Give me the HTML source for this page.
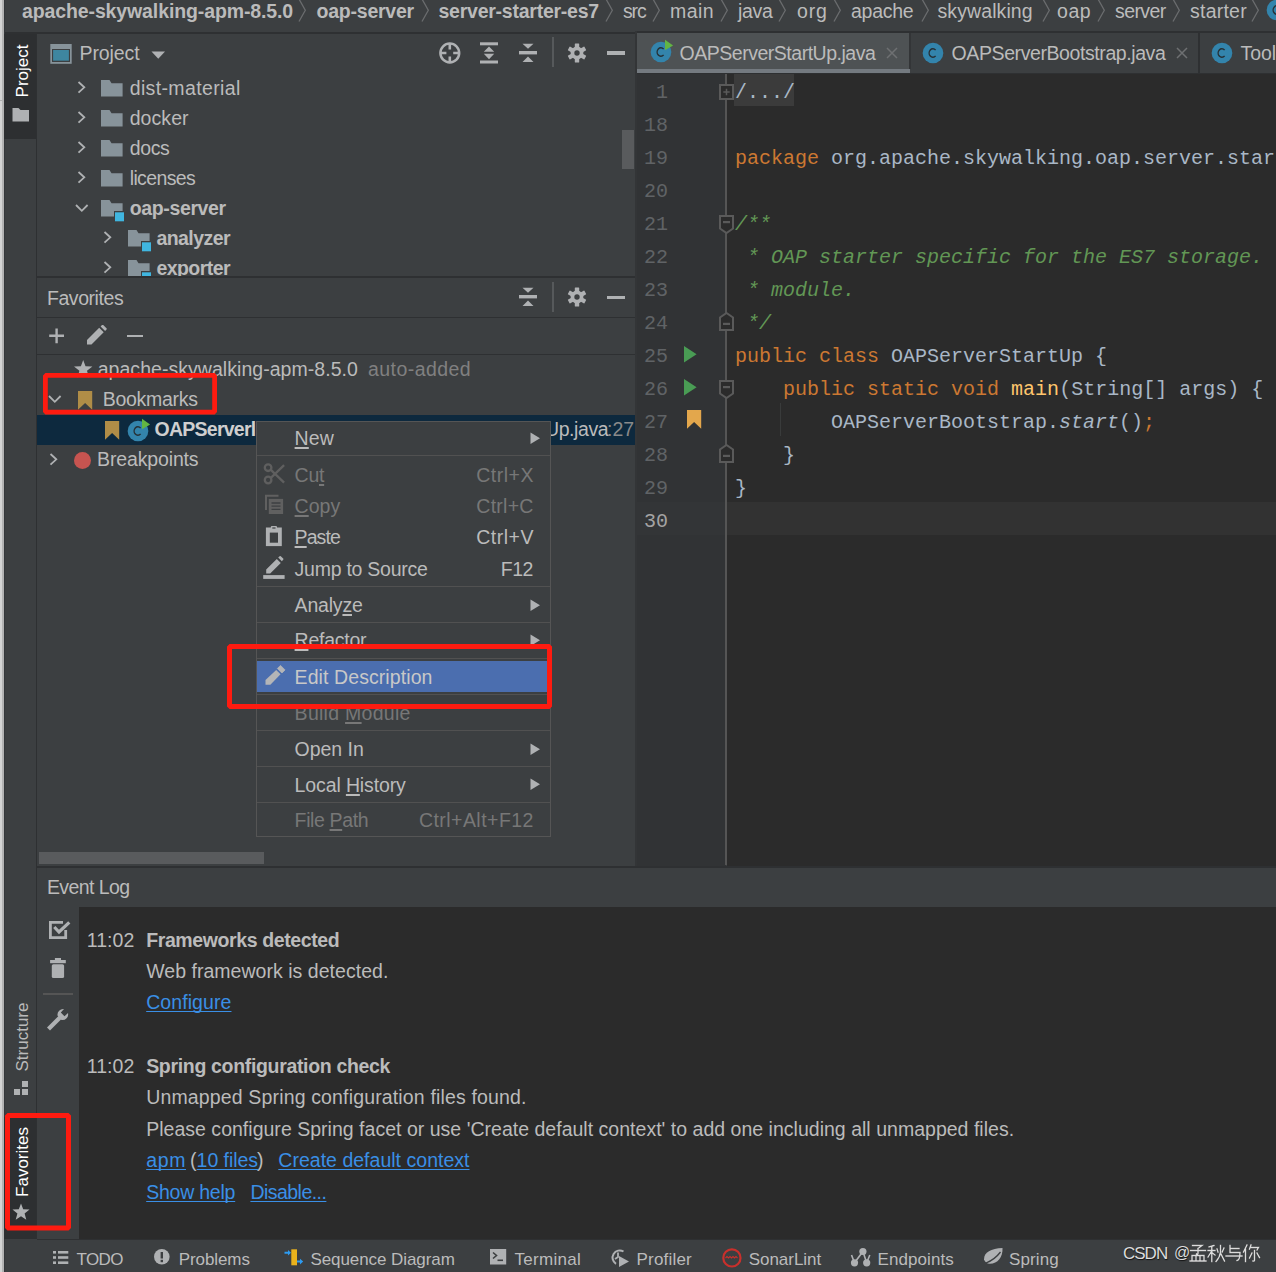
<!DOCTYPE html>
<html><head><meta charset="utf-8"><style>
html,body{margin:0;padding:0;}
body{width:1276px;height:1272px;position:relative;overflow:hidden;background:#3C3F41;font-family:"Liberation Sans",sans-serif;}
body div, body svg{position:absolute;}
.t{white-space:pre;}
.code{font-family:"Liberation Mono",monospace;font-size:20px;line-height:20px;}
u{text-decoration:underline;}
</style></head><body>
<div style="left:0px;top:0px;width:1276px;height:1272px;background:#3C3F41;"></div>
<div style="left:0px;top:0px;width:2px;height:1272px;background:#D4D4D4;"></div>
<div style="left:2px;top:0px;width:2px;height:1272px;background:#B3B3B3;"></div>
<div style="left:0px;top:100px;width:2px;height:1px;background:#B0B0B0;"></div>
<div style="left:4px;top:32px;width:632px;height:2px;background:#2E3032;"></div>
<div style="left:636px;top:31px;width:640px;height:2px;background:#2E3032;"></div>
<div class="t" style="left:22px;top:1.99px;font-size:19.5px;line-height:19.5px;color:#BBBBBB;font-weight:bold;font-family:'Liberation Sans', sans-serif;letter-spacing:-0.116px;">apache-skywalking-apm-8.5.0</div>
<div class="t" style="left:316.5px;top:1.99px;font-size:19.5px;line-height:19.5px;color:#BBBBBB;font-weight:bold;font-family:'Liberation Sans', sans-serif;letter-spacing:-0.224px;">oap-server</div>
<div class="t" style="left:438.5px;top:1.99px;font-size:19.5px;line-height:19.5px;color:#BBBBBB;font-weight:bold;font-family:'Liberation Sans', sans-serif;letter-spacing:-0.242px;">server-starter-es7</div>
<div class="t" style="left:623px;top:1.99px;font-size:19.5px;line-height:19.5px;color:#BBBBBB;font-weight:normal;font-family:'Liberation Sans', sans-serif;letter-spacing:-1.150px;">src</div>
<div class="t" style="left:670px;top:1.99px;font-size:19.5px;line-height:19.5px;color:#BBBBBB;font-weight:normal;font-family:'Liberation Sans', sans-serif;letter-spacing:0.445px;">main</div>
<div class="t" style="left:738px;top:1.99px;font-size:19.5px;line-height:19.5px;color:#BBBBBB;font-weight:normal;font-family:'Liberation Sans', sans-serif;letter-spacing:-0.289px;">java</div>
<div class="t" style="left:797px;top:1.99px;font-size:19.5px;line-height:19.5px;color:#BBBBBB;font-weight:normal;font-family:'Liberation Sans', sans-serif;letter-spacing:0.806px;">org</div>
<div class="t" style="left:851px;top:1.99px;font-size:19.5px;line-height:19.5px;color:#BBBBBB;font-weight:normal;font-family:'Liberation Sans', sans-serif;letter-spacing:-0.274px;">apache</div>
<div class="t" style="left:937.5px;top:1.99px;font-size:19.5px;line-height:19.5px;color:#BBBBBB;font-weight:normal;font-family:'Liberation Sans', sans-serif;letter-spacing:0.093px;">skywalking</div>
<div class="t" style="left:1057px;top:1.99px;font-size:19.5px;line-height:19.5px;color:#BBBBBB;font-weight:normal;font-family:'Liberation Sans', sans-serif;letter-spacing:0.584px;">oap</div>
<div class="t" style="left:1115px;top:1.99px;font-size:19.5px;line-height:19.5px;color:#BBBBBB;font-weight:normal;font-family:'Liberation Sans', sans-serif;letter-spacing:-0.597px;">server</div>
<div class="t" style="left:1190px;top:1.99px;font-size:19.5px;line-height:19.5px;color:#BBBBBB;font-weight:normal;font-family:'Liberation Sans', sans-serif;letter-spacing:0.236px;">starter</div>
<svg style="left:297.7px;top:0px;" width="10" height="24" viewBox="0 0 10 24"><path d="M1 -1 L7.3 10.3 L1 21.5" fill="none" stroke="#6A6C6E" stroke-width="1.3"/></svg>
<svg style="left:420.6px;top:0px;" width="10" height="24" viewBox="0 0 10 24"><path d="M1 -1 L7.3 10.3 L1 21.5" fill="none" stroke="#6A6C6E" stroke-width="1.3"/></svg>
<svg style="left:605px;top:0px;" width="10" height="24" viewBox="0 0 10 24"><path d="M1 -1 L7.3 10.3 L1 21.5" fill="none" stroke="#6A6C6E" stroke-width="1.3"/></svg>
<svg style="left:652px;top:0px;" width="10" height="24" viewBox="0 0 10 24"><path d="M1 -1 L7.3 10.3 L1 21.5" fill="none" stroke="#6A6C6E" stroke-width="1.3"/></svg>
<svg style="left:720px;top:0px;" width="10" height="24" viewBox="0 0 10 24"><path d="M1 -1 L7.3 10.3 L1 21.5" fill="none" stroke="#6A6C6E" stroke-width="1.3"/></svg>
<svg style="left:777.7px;top:0px;" width="10" height="24" viewBox="0 0 10 24"><path d="M1 -1 L7.3 10.3 L1 21.5" fill="none" stroke="#6A6C6E" stroke-width="1.3"/></svg>
<svg style="left:833px;top:0px;" width="10" height="24" viewBox="0 0 10 24"><path d="M1 -1 L7.3 10.3 L1 21.5" fill="none" stroke="#6A6C6E" stroke-width="1.3"/></svg>
<svg style="left:921px;top:0px;" width="10" height="24" viewBox="0 0 10 24"><path d="M1 -1 L7.3 10.3 L1 21.5" fill="none" stroke="#6A6C6E" stroke-width="1.3"/></svg>
<svg style="left:1041.5px;top:0px;" width="10" height="24" viewBox="0 0 10 24"><path d="M1 -1 L7.3 10.3 L1 21.5" fill="none" stroke="#6A6C6E" stroke-width="1.3"/></svg>
<svg style="left:1096.8px;top:0px;" width="10" height="24" viewBox="0 0 10 24"><path d="M1 -1 L7.3 10.3 L1 21.5" fill="none" stroke="#6A6C6E" stroke-width="1.3"/></svg>
<svg style="left:1172px;top:0px;" width="10" height="24" viewBox="0 0 10 24"><path d="M1 -1 L7.3 10.3 L1 21.5" fill="none" stroke="#6A6C6E" stroke-width="1.3"/></svg>
<svg style="left:1251px;top:0px;" width="10" height="24" viewBox="0 0 10 24"><path d="M1 -1 L7.3 10.3 L1 21.5" fill="none" stroke="#6A6C6E" stroke-width="1.3"/></svg>
<div style="left:4px;top:34px;width:32px;height:1205px;background:#3C3F41;"></div>
<div style="left:4px;top:0px;width:1px;height:1272px;background:#34373A;"></div>
<div style="left:36px;top:34px;width:1px;height:1205px;background:#2E3032;"></div>
<div style="left:4px;top:34px;width:31.5px;height:105px;background:#2D2F31;"></div>
<div class="t" style="left:22px;top:71px;transform:translate(-50%,-50%) rotate(-90deg);font-size:17px;line-height:17px;color:#FFFFFF;">Project</div>
<svg style="left:12px;top:107px;" width="18" height="16" viewBox="0 0 18 16"><path d="M0.5 1 H6.5 L8.5 3 H17 V14.5 H0.5 Z" fill="#AFB1B3"/></svg>
<div class="t" style="left:22px;top:1037px;transform:translate(-50%,-50%) rotate(-90deg);font-size:17px;line-height:17px;color:#BBBBBB;">Structure</div>
<svg style="left:14px;top:1081px;" width="14" height="14" viewBox="0 0 14 14"><rect x="8" y="0" width="6" height="6" fill="#AFB1B3"/><rect x="0" y="8" width="6" height="6" fill="#AFB1B3"/><rect x="8" y="8" width="6" height="6" fill="#AFB1B3"/></svg>
<div style="left:4px;top:1117px;width:31.5px;height:122px;background:#2D2F31;"></div>
<div class="t" style="left:22px;top:1162px;transform:translate(-50%,-50%) rotate(-90deg);font-size:17px;line-height:17px;color:#FFFFFF;">Favorites</div>
<svg style="left:12px;top:1203px;" width="18" height="18" viewBox="0 0 18 18"><path d="M9 0.5 L11.2 6.3 L17.5 6.6 L12.6 10.6 L14.3 16.8 L9 13.3 L3.7 16.8 L5.4 10.6 L0.5 6.6 L6.8 6.3 Z" fill="#AFB1B3"/></svg>
<div style="left:37px;top:34px;width:599px;height:242px;background:#3C3F41;"></div>
<svg style="left:50px;top:44px;" width="22" height="19.5" viewBox="0 0 22 19.5"><rect x="0.3" y="0" width="21.4" height="19.8" fill="#87939A"/><rect x="2" y="5" width="18" height="13" fill="#3C3F41"/><rect x="3.1" y="6" width="15.8" height="10.7" fill="#3E86A0"/></svg>
<div class="t" style="left:79.5px;top:44.49px;font-size:19.5px;line-height:19.5px;color:#BBBBBB;font-weight:normal;font-family:'Liberation Sans', sans-serif;letter-spacing:-0.081px;">Project</div>
<svg style="left:151px;top:50px;" width="15" height="10" viewBox="0 0 15 10"><path d="M0.5 1.5 H14 L7.25 8.8 Z" fill="#AFB1B3"/></svg>
<svg style="left:438px;top:42px;" width="24" height="24" viewBox="0 0 24 24"><circle cx="11.8" cy="11" r="9.4" fill="none" stroke="#AFB1B3" stroke-width="2.5"/><path d="M11.8 1.7 V7.6 M11.8 14.4 V20.3 M2.4 11 H8.4 M15.2 11 H21.2" stroke="#AFB1B3" stroke-width="2.6"/></svg>
<svg style="left:478px;top:40px;" width="22" height="26" viewBox="0 0 22 26"><rect x="2" y="2.3" width="18" height="3" fill="#AFB1B3"/><rect x="2" y="20.5" width="18" height="3" fill="#AFB1B3"/><path d="M11 6.5 L16.2 11.7 H5.8 Z M5.8 13.8 H16.2 L11 19.2 Z" fill="#AFB1B3"/></svg>
<svg style="left:517px;top:40px;" width="22" height="26" viewBox="0 0 22 26"><rect x="2" y="11" width="18" height="3.4" fill="#AFB1B3"/><path d="M5.5 3.8 H16.5 L11 8.7 Z M11 16.6 L16.5 22 H5.5 Z" fill="#AFB1B3"/></svg>
<div style="left:552px;top:37px;width:2px;height:30px;background:#56595B;"></div>
<svg style="left:567px;top:43px;" width="19.5" height="20" viewBox="0 0 19.5 20"><g transform="translate(10,10)"><circle r="6.4" fill="#AFB1B3"/><g fill="#AFB1B3"><rect x="-2.2" y="-9.5" width="4.4" height="19" rx="0.6"/><rect x="-2.2" y="-9.5" width="4.4" height="19" rx="0.6" transform="rotate(60)"/><rect x="-2.2" y="-9.5" width="4.4" height="19" rx="0.6" transform="rotate(120)"/></g><circle r="2.7" fill="#3C3F41"/></g></svg>
<div style="left:607px;top:51px;width:18px;height:3.7px;background:#AFB1B3;"></div>
<div style="left:622px;top:130px;width:12px;height:39px;background:#595B5D;"></div>
<svg style="left:76.5px;top:81.05px;" width="10" height="13" viewBox="0 0 10 13"><path d="M1.5 1 L7.3 6.35 L1.5 11.7" fill="none" stroke="#AFB1B3" stroke-width="1.8"/></svg>
<svg style="left:101.3px;top:79.8px;" width="24" height="22" viewBox="0 0 24 22"><path d="M0 0 H8.5 L10.5 3.3 H21.6 V16.5 H0 Z" fill="#87939A"/></svg>
<div class="t" style="left:129.7px;top:79.29px;font-size:19.5px;line-height:19.5px;color:#BBBBBB;font-weight:normal;font-family:'Liberation Sans', sans-serif;letter-spacing:0.366px;">dist-material</div>
<svg style="left:76.5px;top:111.05px;" width="10" height="13" viewBox="0 0 10 13"><path d="M1.5 1 L7.3 6.35 L1.5 11.7" fill="none" stroke="#AFB1B3" stroke-width="1.8"/></svg>
<svg style="left:101.3px;top:109.8px;" width="24" height="22" viewBox="0 0 24 22"><path d="M0 0 H8.5 L10.5 3.3 H21.6 V16.5 H0 Z" fill="#87939A"/></svg>
<div class="t" style="left:129.7px;top:109.29px;font-size:19.5px;line-height:19.5px;color:#BBBBBB;font-weight:normal;font-family:'Liberation Sans', sans-serif;letter-spacing:0.074px;">docker</div>
<svg style="left:76.5px;top:141.05px;" width="10" height="13" viewBox="0 0 10 13"><path d="M1.5 1 L7.3 6.35 L1.5 11.7" fill="none" stroke="#AFB1B3" stroke-width="1.8"/></svg>
<svg style="left:101.3px;top:139.8px;" width="24" height="22" viewBox="0 0 24 22"><path d="M0 0 H8.5 L10.5 3.3 H21.6 V16.5 H0 Z" fill="#87939A"/></svg>
<div class="t" style="left:129.7px;top:139.29px;font-size:19.5px;line-height:19.5px;color:#BBBBBB;font-weight:normal;font-family:'Liberation Sans', sans-serif;letter-spacing:-0.362px;">docs</div>
<svg style="left:76.5px;top:171.05px;" width="10" height="13" viewBox="0 0 10 13"><path d="M1.5 1 L7.3 6.35 L1.5 11.7" fill="none" stroke="#AFB1B3" stroke-width="1.8"/></svg>
<svg style="left:101.3px;top:169.8px;" width="24" height="22" viewBox="0 0 24 22"><path d="M0 0 H8.5 L10.5 3.3 H21.6 V16.5 H0 Z" fill="#87939A"/></svg>
<div class="t" style="left:129.7px;top:169.29px;font-size:19.5px;line-height:19.5px;color:#BBBBBB;font-weight:normal;font-family:'Liberation Sans', sans-serif;letter-spacing:-0.620px;">licenses</div>
<svg style="left:74.5px;top:202.5px;" width="14" height="10" viewBox="0 0 14 10"><path d="M1 2 L6.8 7.8 L12.6 2" fill="none" stroke="#AFB1B3" stroke-width="1.8"/></svg>
<svg style="left:101.3px;top:200px;" width="24" height="22" viewBox="0 0 24 22"><path d="M0 0 H8.5 L10.5 3.3 H21.6 V11 H13 V16.5 H0 Z" fill="#87939A"/><rect x="14" y="12.3" width="9" height="9" fill="#40B6E0"/></svg>
<div class="t" style="left:129.7px;top:199.29px;font-size:19.5px;line-height:19.5px;color:#BBBBBB;font-weight:bold;font-family:'Liberation Sans', sans-serif;letter-spacing:-0.358px;">oap-server</div>
<div style="left:0;top:0;width:1276px;height:276px;overflow:hidden;">
<svg style="left:103px;top:231.05px;" width="10" height="13" viewBox="0 0 10 13"><path d="M1.5 1 L7.3 6.35 L1.5 11.7" fill="none" stroke="#AFB1B3" stroke-width="1.8"/></svg>
<svg style="left:128px;top:230px;" width="24" height="22" viewBox="0 0 24 22"><path d="M0 0 H8.5 L10.5 3.3 H21.6 V11 H13 V16.5 H0 Z" fill="#87939A"/><rect x="14" y="12.3" width="9" height="9" fill="#40B6E0"/></svg>
<div class="t" style="left:156.4px;top:229.29px;font-size:19.5px;line-height:19.5px;color:#BBBBBB;font-weight:bold;font-family:'Liberation Sans', sans-serif;letter-spacing:-0.550px;">analyzer</div>
<svg style="left:103px;top:261.04999999999995px;" width="10" height="13" viewBox="0 0 10 13"><path d="M1.5 1 L7.3 6.35 L1.5 11.7" fill="none" stroke="#AFB1B3" stroke-width="1.8"/></svg>
<svg style="left:128px;top:260px;" width="24" height="22" viewBox="0 0 24 22"><path d="M0 0 H8.5 L10.5 3.3 H21.6 V11 H13 V16.5 H0 Z" fill="#87939A"/><rect x="14" y="12.3" width="9" height="9" fill="#40B6E0"/></svg>
<div class="t" style="left:156.4px;top:259.29px;font-size:19.5px;line-height:19.5px;color:#BBBBBB;font-weight:bold;font-family:'Liberation Sans', sans-serif;letter-spacing:-0.547px;">exporter</div>
</div>
<div style="left:37px;top:276px;width:599px;height:2px;background:#2E3032;"></div>
<div class="t" style="left:46.9px;top:289.29px;font-size:19.5px;line-height:19.5px;color:#BBBBBB;font-weight:normal;font-family:'Liberation Sans', sans-serif;letter-spacing:-0.423px;">Favorites</div>
<svg style="left:517px;top:284px;" width="22" height="26" viewBox="0 0 22 26"><rect x="2" y="11" width="18" height="3.4" fill="#AFB1B3"/><path d="M5.5 3.8 H16.5 L11 8.7 Z M11 16.6 L16.5 22 H5.5 Z" fill="#AFB1B3"/></svg>
<div style="left:552px;top:282px;width:2px;height:30px;background:#56595B;"></div>
<svg style="left:567px;top:286.5px;" width="19.5" height="20" viewBox="0 0 19.5 20"><g transform="translate(10,10)"><circle r="6.4" fill="#AFB1B3"/><g fill="#AFB1B3"><rect x="-2.2" y="-9.5" width="4.4" height="19" rx="0.6"/><rect x="-2.2" y="-9.5" width="4.4" height="19" rx="0.6" transform="rotate(60)"/><rect x="-2.2" y="-9.5" width="4.4" height="19" rx="0.6" transform="rotate(120)"/></g><circle r="2.7" fill="#3C3F41"/></g></svg>
<div style="left:607px;top:295.5px;width:18px;height:3.7px;background:#AFB1B3;"></div>
<div style="left:37px;top:317px;width:599px;height:1px;background:#2E3032;"></div>
<svg style="left:48px;top:327px;" width="18" height="18" viewBox="0 0 18 18"><path d="M1.2 8.8 H16 M8.6 1.4 V16.2" stroke="#AFB1B3" stroke-width="2.4"/></svg>
<svg style="left:86px;top:325px;" width="22" height="21" viewBox="0 0 22 21"><path d="M1 19.5 V15 L13.2 2.8 L17.7 7.3 L5.5 19.5 Z M14.6 1.4 L16 0 Q16.6 -0.5 17.2 0 L20.5 3.3 Q21 3.9 20.5 4.5 L19.1 5.9 Z" fill="#AFB1B3"/></svg>
<div style="left:127px;top:334.6px;width:15.6px;height:2.4px;background:#AFB1B3;"></div>
<div style="left:37px;top:354px;width:599px;height:1px;background:#2E3032;"></div>
<svg style="left:73.6px;top:360px;" width="19.5" height="18" viewBox="0 0 19.5 18"><path d="M9.2 0 L11.5 6.2 L18.4 6.5 L13 10.8 L14.9 17.5 L9.2 13.7 L3.5 17.5 L5.4 10.8 L0 6.5 L6.9 6.2 Z" fill="#AFB1B3"/></svg>
<div class="t" style="left:97.7px;top:360.49px;font-size:19.5px;line-height:19.5px;color:#BBBBBB;font-weight:normal;font-family:'Liberation Sans', sans-serif;letter-spacing:0.044px;">apache-skywalking-apm-8.5.0</div>
<div class="t" style="left:367.9px;top:360.49px;font-size:19.5px;line-height:19.5px;color:#808080;font-weight:normal;font-family:'Liberation Sans', sans-serif;letter-spacing:0.459px;">auto-added</div>
<svg style="left:47.5px;top:394px;" width="14" height="10" viewBox="0 0 14 10"><path d="M1 2 L6.8 7.8 L12.6 2" fill="none" stroke="#AFB1B3" stroke-width="1.8"/></svg>
<svg style="left:77.8px;top:391px;" width="15" height="19.5" viewBox="0 0 15 19.5"><path d="M0 0 H14.2 V18.8 L7.1 12 L0 18.8 Z" fill="#B08D47"/></svg>
<div class="t" style="left:102.8px;top:390.49px;font-size:19.5px;line-height:19.5px;color:#BBBBBB;font-weight:normal;font-family:'Liberation Sans', sans-serif;letter-spacing:-0.291px;">Bookmarks</div>
<div style="left:37px;top:415px;width:598px;height:29.6px;background:#0D293E;"></div>
<svg style="left:104.6px;top:421px;" width="15" height="19.5" viewBox="0 0 15 19.5"><path d="M0 0 H14.2 V18.8 L7.1 12 L0 18.8 Z" fill="#B08D47"/></svg>
<svg style="left:125.1px;top:417px;" width="28" height="28" viewBox="0 0 28 28"><circle cx="13" cy="14" r="10.35" fill="#3384AC"/><path d="M15.6 11.1 A3.7 4.3 0 1 0 15.6 16.9" fill="none" stroke="#263035" stroke-width="1.45"/><path d="M17 1.8000000000000007 L25.1 7.5 L17 12.2 Z" fill="#62B543"/></svg>
<svg style="left:1264px;top:-4px;" width="28" height="28" viewBox="0 0 28 28"><circle cx="13" cy="14" r="10.35" fill="#3384AC"/><path d="M15.6 11.1 A3.7 4.3 0 1 0 15.6 16.9" fill="none" stroke="#263035" stroke-width="1.45"/></svg>
<div class="t" style="left:154.5px;top:420.49px;font-size:19.5px;line-height:19.5px;color:#CFCFCF;font-weight:bold;font-family:'Liberation Sans', sans-serif;letter-spacing:-0.743px;">OAPServerl</div>
<div class="t" style="left:545px;top:420.49px;font-size:19.5px;line-height:19.5px;color:#BBBBBB;font-weight:normal;font-family:'Liberation Sans', sans-serif;letter-spacing:-0.418px;">Up.java</div>
<div class="t" style="left:607px;top:420.49px;font-size:19.5px;line-height:19.5px;color:#8A8A8A;font-weight:normal;font-family:'Liberation Sans', sans-serif;">:27</div>
<svg style="left:49px;top:452.75px;" width="10" height="13" viewBox="0 0 10 13"><path d="M1.5 1 L7.3 6.35 L1.5 11.7" fill="none" stroke="#AFB1B3" stroke-width="1.8"/></svg>
<svg style="left:73.5px;top:452px;" width="17" height="17" viewBox="0 0 17 17"><circle cx="8.5" cy="8.5" r="8.5" fill="#C75450"/></svg>
<div class="t" style="left:97.1px;top:450.49px;font-size:19.5px;line-height:19.5px;color:#BBBBBB;font-weight:normal;font-family:'Liberation Sans', sans-serif;letter-spacing:-0.147px;">Breakpoints</div>
<div style="left:39px;top:852px;width:225px;height:12px;background:#595B5D;"></div>
<div style="left:37px;top:866px;width:1239px;height:2px;background:#2E3032;"></div>
<div style="left:635px;top:31px;width:2px;height:835px;background:#333537;"></div>
<div style="left:637px;top:33px;width:639px;height:40px;background:#3C3F41;"></div>
<div style="left:637px;top:33px;width:272px;height:36px;background:#4E5254;"></div>
<div style="left:909px;top:33px;width:1.5px;height:36px;background:#333537;"></div>
<div style="left:637px;top:69px;width:273px;height:4.5px;background:#747A80;"></div>
<svg style="left:648.3px;top:38.3px;" width="28" height="28" viewBox="0 0 28 28"><circle cx="13" cy="14" r="10.35" fill="#3384AC"/><path d="M15.6 11.1 A3.7 4.3 0 1 0 15.6 16.9" fill="none" stroke="#263035" stroke-width="1.45"/><path d="M17 1.8000000000000007 L25.1 7.5 L17 12.2 Z" fill="#62B543"/></svg>
<div class="t" style="left:679.6px;top:43.89px;font-size:19.5px;line-height:19.5px;color:#BBBBBB;font-weight:normal;font-family:'Liberation Sans', sans-serif;letter-spacing:-0.485px;">OAPServerStartUp.java</div>
<svg style="left:886px;top:47px;" width="12" height="12" viewBox="0 0 12 12"><path d="M1 1 L11 11 M11 1 L1 11" stroke="#6E7072" stroke-width="1.5"/></svg>
<svg style="left:920px;top:39px;" width="28" height="28" viewBox="0 0 28 28"><circle cx="13" cy="14" r="10.35" fill="#3384AC"/><path d="M15.6 11.1 A3.7 4.3 0 1 0 15.6 16.9" fill="none" stroke="#263035" stroke-width="1.45"/></svg>
<div class="t" style="left:951.6px;top:43.89px;font-size:19.5px;line-height:19.5px;color:#BBBBBB;font-weight:normal;font-family:'Liberation Sans', sans-serif;letter-spacing:-0.412px;">OAPServerBootstrap.java</div>
<svg style="left:1176px;top:47px;" width="12" height="12" viewBox="0 0 12 12"><path d="M1 1 L11 11 M11 1 L1 11" stroke="#6E7072" stroke-width="1.5"/></svg>
<div style="left:1198px;top:33px;width:2px;height:40px;background:#2E3032;"></div>
<svg style="left:1208.8px;top:39px;" width="28" height="28" viewBox="0 0 28 28"><circle cx="13" cy="14" r="10.35" fill="#3384AC"/><path d="M15.6 11.1 A3.7 4.3 0 1 0 15.6 16.9" fill="none" stroke="#263035" stroke-width="1.45"/></svg>
<div class="t" style="left:1240.4px;top:43.89px;font-size:19.5px;line-height:19.5px;color:#BBBBBB;font-weight:normal;font-family:'Liberation Sans', sans-serif;">Tool</div>
<div style="left:637px;top:73px;width:639px;height:1px;background:#2E3032;"></div>
<div style="left:637px;top:74px;width:89px;height:792px;background:#313335;"></div>
<div style="left:727px;top:74px;width:549px;height:792px;background:#2B2B2B;"></div>
<div style="left:726px;top:74px;width:1px;height:791px;background:#555555;"></div>
<div style="left:727px;top:502px;width:549px;height:33px;background:#323232;"></div>
<div style="left:637px;top:502px;width:88px;height:33px;background:#333537;"></div>
<div style="left:725px;top:74px;width:2px;height:791px;background:#555555;"></div>
<div class="t" style="left:620px;width:48px;text-align:right;top:83.37px;font-size:20px;line-height:20px;color:#606366;font-family:'Liberation Mono',monospace;">1</div>
<div class="t" style="left:620px;width:48px;text-align:right;top:116.37px;font-size:20px;line-height:20px;color:#606366;font-family:'Liberation Mono',monospace;">18</div>
<div class="t" style="left:620px;width:48px;text-align:right;top:149.37px;font-size:20px;line-height:20px;color:#606366;font-family:'Liberation Mono',monospace;">19</div>
<div class="t" style="left:620px;width:48px;text-align:right;top:182.37px;font-size:20px;line-height:20px;color:#606366;font-family:'Liberation Mono',monospace;">20</div>
<div class="t" style="left:620px;width:48px;text-align:right;top:215.37px;font-size:20px;line-height:20px;color:#606366;font-family:'Liberation Mono',monospace;">21</div>
<div class="t" style="left:620px;width:48px;text-align:right;top:248.37px;font-size:20px;line-height:20px;color:#606366;font-family:'Liberation Mono',monospace;">22</div>
<div class="t" style="left:620px;width:48px;text-align:right;top:281.37px;font-size:20px;line-height:20px;color:#606366;font-family:'Liberation Mono',monospace;">23</div>
<div class="t" style="left:620px;width:48px;text-align:right;top:314.37px;font-size:20px;line-height:20px;color:#606366;font-family:'Liberation Mono',monospace;">24</div>
<div class="t" style="left:620px;width:48px;text-align:right;top:347.37px;font-size:20px;line-height:20px;color:#606366;font-family:'Liberation Mono',monospace;">25</div>
<div class="t" style="left:620px;width:48px;text-align:right;top:380.37px;font-size:20px;line-height:20px;color:#606366;font-family:'Liberation Mono',monospace;">26</div>
<div class="t" style="left:620px;width:48px;text-align:right;top:413.37px;font-size:20px;line-height:20px;color:#606366;font-family:'Liberation Mono',monospace;">27</div>
<div class="t" style="left:620px;width:48px;text-align:right;top:446.37px;font-size:20px;line-height:20px;color:#606366;font-family:'Liberation Mono',monospace;">28</div>
<div class="t" style="left:620px;width:48px;text-align:right;top:479.37px;font-size:20px;line-height:20px;color:#606366;font-family:'Liberation Mono',monospace;">29</div>
<div class="t" style="left:620px;width:48px;text-align:right;top:512.37px;font-size:20px;line-height:20px;color:#A4A3A3;font-family:'Liberation Mono',monospace;">30</div>
<div style="left:734px;top:74.4px;width:60px;height:31.4px;background:#3B3B3B;"></div>
<svg style="left:718px;top:83.5px;" width="17" height="17" viewBox="0 0 17 17"><rect x="2" y="1" width="13" height="14" fill="#2B2B2B" stroke="#5A5A5A" stroke-width="2"/><path d="M5.3 8 H11.7 M8.5 4.8 V11.2" stroke="#5A5A5A" stroke-width="1.5"/></svg>
<div class="t code" style="left:735px;top:83.37px;"><span style="color:#A9B7C6;">/.../</span></div>
<div class="t code" style="left:735px;top:149.37px;"><span style="color:#CC7832;">package</span><span style="color:#A9B7C6;"> org.apache.skywalking.oap.server.starter;</span></div>
<svg style="left:718px;top:215px;" width="17" height="19.5" viewBox="0 0 17 19.5"><path d="M2 1 H15 V13.5 L8.5 18 L2 13.5 Z" fill="#2B2B2B" stroke="#5A5A5A" stroke-width="2"/><rect x="5" y="6" width="7" height="2.2" fill="#5A5A5A"/></svg>
<div class="t code" style="left:735px;top:215.37px;"><span style="color:#629755;font-style:italic;">/**</span></div>
<div class="t code" style="left:735px;top:248.37px;"><span style="color:#629755;font-style:italic;"> * OAP starter specific for the ES7 storage.</span></div>
<div class="t code" style="left:735px;top:281.37px;"><span style="color:#629755;font-style:italic;"> * module.</span></div>
<svg style="left:718px;top:312px;" width="17" height="19.5" viewBox="0 0 17 19.5"><path d="M2 18 H15 V5.5 L8.5 1 L2 5.5 Z" fill="#2B2B2B" stroke="#5A5A5A" stroke-width="2"/><rect x="5" y="10.8" width="7" height="2.2" fill="#5A5A5A"/></svg>
<div class="t code" style="left:735px;top:314.37px;"><span style="color:#629755;font-style:italic;"> */</span></div>
<svg style="left:683.6px;top:346.3px;" width="13" height="17" viewBox="0 0 13 17"><path d="M0 0 L12.6 8.2 L0 16.4 Z" fill="#499C54"/></svg>
<div class="t code" style="left:735px;top:347.37px;"><span style="color:#CC7832;">public</span><span style="color:#A9B7C6;"> </span><span style="color:#CC7832;">class</span><span style="color:#A9B7C6;"> OAPServerStartUp {</span></div>
<svg style="left:683.6px;top:379.2px;" width="13" height="17" viewBox="0 0 13 17"><path d="M0 0 L12.6 8.2 L0 16.4 Z" fill="#499C54"/></svg>
<svg style="left:718px;top:380px;" width="17" height="19.5" viewBox="0 0 17 19.5"><path d="M2 1 H15 V13.5 L8.5 18 L2 13.5 Z" fill="#2B2B2B" stroke="#5A5A5A" stroke-width="2"/><rect x="5" y="6" width="7" height="2.2" fill="#5A5A5A"/></svg>
<div class="t code" style="left:735px;top:380.37px;"><span style="color:#A9B7C6;">    </span><span style="color:#CC7832;">public</span><span style="color:#A9B7C6;"> </span><span style="color:#CC7832;">static</span><span style="color:#A9B7C6;"> </span><span style="color:#CC7832;">void</span><span style="color:#A9B7C6;"> </span><span style="color:#FFC66D;">main</span><span style="color:#A9B7C6;">(String[] args) {</span></div>
<svg style="left:686.9px;top:410.2px;" width="15" height="19.5" viewBox="0 0 15 19.5"><path d="M0 0 H14.2 V18.8 L7.1 12 L0 18.8 Z" fill="#E3A74C"/></svg>
<div style="left:780px;top:403px;width:1px;height:32.5px;background:#393B3B;"></div>
<div class="t code" style="left:735px;top:413.37px;"><span style="color:#A9B7C6;">        OAPServerBootstrap.</span><span style="color:#A9B7C6;font-style:italic;">start</span><span style="color:#A9B7C6;">()</span><span style="color:#CC7832;">;</span></div>
<svg style="left:718px;top:444px;" width="17" height="19.5" viewBox="0 0 17 19.5"><path d="M2 18 H15 V5.5 L8.5 1 L2 5.5 Z" fill="#2B2B2B" stroke="#5A5A5A" stroke-width="2"/><rect x="5" y="10.8" width="7" height="2.2" fill="#5A5A5A"/></svg>
<div class="t code" style="left:735px;top:446.37px;"><span style="color:#A9B7C6;">    }</span></div>
<div class="t code" style="left:735px;top:479.37px;"><span style="color:#A9B7C6;">}</span></div>
<div class="t" style="left:46.9px;top:878.49px;font-size:19.5px;line-height:19.5px;color:#BBBBBB;font-weight:normal;font-family:'Liberation Sans', sans-serif;letter-spacing:-0.577px;">Event Log</div>
<div style="left:79px;top:907px;width:1197px;height:332px;background:#2B2B2B;"></div>
<svg style="left:48px;top:920px;" width="23" height="21" viewBox="0 0 23 21"><path d="M15 2.4 H2.4 V17.7 H17.7 V10" fill="none" stroke="#AFB1B3" stroke-width="2.8"/><path d="M6.3 7 L11 12 L21.3 2.3" fill="none" stroke="#AFB1B3" stroke-width="3.2"/></svg>
<svg style="left:49px;top:957px;" width="18" height="22" viewBox="0 0 18 22"><rect x="2.8" y="7.2" width="12.3" height="13.8" rx="1.6" fill="#AFB1B3"/><rect x="1.1" y="3" width="15.7" height="3.2" fill="#AFB1B3"/><rect x="5.9" y="1" width="6.1" height="2.5" fill="#AFB1B3"/></svg>
<div style="left:43px;top:993px;width:30px;height:2px;background:#555555;"></div>
<svg style="left:47px;top:1008px;" width="23" height="23" viewBox="0 0 23 23"><path d="M3 19.5 L12 10.5" stroke="#AFB1B3" stroke-width="4.2" stroke-linecap="square"/><path d="M10.5 7.5 A5.8 5.8 0 0 1 17 1 L13.8 4.5 L17.5 8.2 L21 5 A5.8 5.8 0 0 1 14.5 12 Z" fill="#AFB1B3"/></svg>
<div class="t" style="left:86.7px;top:930.99px;font-size:19.5px;line-height:19.5px;color:#BBBBBB;font-weight:normal;font-family:'Liberation Sans', sans-serif;letter-spacing:0.089px;">11:02</div>
<div class="t" style="left:146.2px;top:930.99px;font-size:19.5px;line-height:19.5px;color:#BBBBBB;font-weight:bold;font-family:'Liberation Sans', sans-serif;letter-spacing:-0.389px;">Frameworks detected</div>
<div class="t" style="left:146.2px;top:962.19px;font-size:19.5px;line-height:19.5px;color:#BBBBBB;font-weight:normal;font-family:'Liberation Sans', sans-serif;letter-spacing:0.034px;">Web framework is detected.</div>
<div class="t" style="left:146.2px;top:993.49px;font-size:19.5px;line-height:19.5px;color:#3A8FE6;font-weight:normal;font-family:'Liberation Sans', sans-serif;text-decoration:underline;text-decoration-skip-ink:none;text-underline-offset:1.5px;letter-spacing:0.082px;">Configure</div>
<div class="t" style="left:86.7px;top:1057.49px;font-size:19.5px;line-height:19.5px;color:#BBBBBB;font-weight:normal;font-family:'Liberation Sans', sans-serif;letter-spacing:0.089px;">11:02</div>
<div class="t" style="left:146.2px;top:1057.49px;font-size:19.5px;line-height:19.5px;color:#BBBBBB;font-weight:bold;font-family:'Liberation Sans', sans-serif;letter-spacing:-0.329px;">Spring configuration check</div>
<div class="t" style="left:146.2px;top:1088.49px;font-size:19.5px;line-height:19.5px;color:#BBBBBB;font-weight:normal;font-family:'Liberation Sans', sans-serif;letter-spacing:0.152px;">Unmapped Spring configuration files found.</div>
<div class="t" style="left:146.2px;top:1120.49px;font-size:19.5px;line-height:19.5px;color:#BBBBBB;font-weight:normal;font-family:'Liberation Sans', sans-serif;letter-spacing:0.019px;">Please configure Spring facet or use &#x27;Create default context&#x27; to add one including all unmapped files.</div>
<div class="t" style="left:146.2px;top:1151.49px;font-size:19.5px;line-height:19.5px;color:#3A8FE6;font-weight:normal;font-family:'Liberation Sans', sans-serif;text-decoration:underline;text-decoration-skip-ink:none;text-underline-offset:1.5px;letter-spacing:0.631px;">apm</div>
<div class="t" style="left:189.9px;top:1151.49px;font-size:19.5px;line-height:19.5px;color:#BBBBBB;font-weight:normal;font-family:'Liberation Sans', sans-serif;">(</div>
<div class="t" style="left:196.6px;top:1151.49px;font-size:19.5px;line-height:19.5px;color:#3A8FE6;font-weight:normal;font-family:'Liberation Sans', sans-serif;text-decoration:underline;text-decoration-skip-ink:none;text-underline-offset:1.5px;letter-spacing:-0.054px;">10 files</div>
<div class="t" style="left:257px;top:1151.49px;font-size:19.5px;line-height:19.5px;color:#BBBBBB;font-weight:normal;font-family:'Liberation Sans', sans-serif;">)</div>
<div class="t" style="left:278.3px;top:1151.49px;font-size:19.5px;line-height:19.5px;color:#3A8FE6;font-weight:normal;font-family:'Liberation Sans', sans-serif;text-decoration:underline;text-decoration-skip-ink:none;text-underline-offset:1.5px;letter-spacing:0.019px;">Create default context</div>
<div class="t" style="left:146.2px;top:1183.29px;font-size:19.5px;line-height:19.5px;color:#3A8FE6;font-weight:normal;font-family:'Liberation Sans', sans-serif;text-decoration:underline;text-decoration-skip-ink:none;text-underline-offset:1.5px;letter-spacing:-0.231px;">Show help</div>
<div class="t" style="left:250.4px;top:1183.29px;font-size:19.5px;line-height:19.5px;color:#3A8FE6;font-weight:normal;font-family:'Liberation Sans', sans-serif;text-decoration:underline;text-decoration-skip-ink:none;text-underline-offset:1.5px;letter-spacing:-0.531px;">Disable...</div>
<div style="left:37px;top:1238.5px;width:1239px;height:1.5px;background:#2E3032;"></div>
<svg style="left:52.9px;top:1250.8px;" width="16" height="14" viewBox="0 0 16 14"><g fill="#AFB1B3"><rect x="0" y="0" width="3" height="2.6"/><rect x="5" y="0" width="10.3" height="2.6"/><rect x="0" y="5.2" width="3" height="2.6"/><rect x="5" y="5.2" width="10.3" height="2.6"/><rect x="0" y="10.4" width="3" height="2.6"/><rect x="5" y="10.4" width="10.3" height="2.6"/></g></svg>
<div class="t" style="left:76.4px;top:1250.81px;font-size:17px;line-height:17px;color:#BBBBBB;font-weight:normal;font-family:'Liberation Sans', sans-serif;letter-spacing:-0.566px;">TODO</div>
<svg style="left:154px;top:1249px;" width="16" height="16" viewBox="0 0 16 16"><circle cx="7.8" cy="7.8" r="7.8" fill="#AFB1B3"/><rect x="6.6" y="3" width="2.4" height="6.5" fill="#3C3F41"/><rect x="6.6" y="10.8" width="2.4" height="2.4" fill="#3C3F41"/></svg>
<div class="t" style="left:178.7px;top:1250.81px;font-size:17px;line-height:17px;color:#BBBBBB;font-weight:normal;font-family:'Liberation Sans', sans-serif;letter-spacing:-0.085px;">Problems</div>
<svg style="left:284px;top:1248px;" width="21" height="19.5" viewBox="0 0 21 19.5"><rect x="7.3" y="1.3" width="5.7" height="16" fill="#EAB21C"/><path d="M0.5 4.8 H4.5 M13 13.6 H16.5" stroke="#2D9BF0" stroke-width="2"/><path d="M4 2 L7 4.8 L4 7.6 Z M16 10.8 L19.2 13.6 L16 16.4 Z" fill="#2D9BF0"/></svg>
<div class="t" style="left:310.4px;top:1250.81px;font-size:17px;line-height:17px;color:#BBBBBB;font-weight:normal;font-family:'Liberation Sans', sans-serif;letter-spacing:-0.074px;">Sequence Diagram</div>
<svg style="left:489.8px;top:1249px;" width="17" height="16" viewBox="0 0 17 16"><rect x="0" y="0" width="16.2" height="15.5" fill="#AFB1B3"/><path d="M3 3.5 L6.5 6.5 L3 9.5" fill="none" stroke="#3C3F41" stroke-width="1.6"/><rect x="7.5" y="10.5" width="5.5" height="1.6" fill="#3C3F41"/></svg>
<div class="t" style="left:514.6px;top:1250.81px;font-size:17px;line-height:17px;color:#BBBBBB;font-weight:normal;font-family:'Liberation Sans', sans-serif;letter-spacing:0.281px;">Terminal</div>
<svg style="left:609.5px;top:1248px;" width="19.5" height="20" viewBox="0 0 19.5 20"><path d="M13.5 3.5 A7.2 7.2 0 1 0 6 15.8" fill="none" stroke="#AFB1B3" stroke-width="2"/><path d="M8 4.5 V9 L5 11" fill="none" stroke="#AFB1B3" stroke-width="1.8"/><path d="M9 8 L19 13.5 L9 19 Z" fill="#AFB1B3"/></svg>
<div class="t" style="left:636.5px;top:1250.81px;font-size:17px;line-height:17px;color:#BBBBBB;font-weight:normal;font-family:'Liberation Sans', sans-serif;letter-spacing:0.194px;">Profiler</div>
<svg style="left:722px;top:1247.5px;" width="19.5" height="20" viewBox="0 0 19.5 20"><circle cx="9.9" cy="9.9" r="8.6" fill="none" stroke="#C9302C" stroke-width="2.2"/><path d="M3.5 10 L5 8.6 L6.5 10 L8 8.6 L9.5 10 L11 8.6 L12.5 10 L14 8.6 L15.5 10" fill="none" stroke="#C9302C" stroke-width="1.2"/></svg>
<div class="t" style="left:748.7px;top:1250.81px;font-size:17px;line-height:17px;color:#BBBBBB;font-weight:normal;font-family:'Liberation Sans', sans-serif;letter-spacing:-0.033px;">SonarLint</div>
<svg style="left:846px;top:1244px;" width="28" height="24" viewBox="0 0 28 24"><g fill="#AFB1B3"><circle cx="16.9" cy="7.5" r="3.6"/><circle cx="8.5" cy="18.8" r="3.6"/><circle cx="20.7" cy="18.8" r="3.6"/></g><path d="M5.5 11 L8.5 18.8 L16.9 7.5 L20.7 18.8 L23.8 11" fill="none" stroke="#AFB1B3" stroke-width="1.6"/></svg>
<div class="t" style="left:877.6px;top:1250.81px;font-size:17px;line-height:17px;color:#BBBBBB;font-weight:normal;font-family:'Liberation Sans', sans-serif;letter-spacing:0.074px;">Endpoints</div>
<svg style="left:983px;top:1247px;" width="21" height="19.5" viewBox="0 0 21 19.5"><path d="M1 12.5 C1 5 8 1.5 19.5 1 C20 10 14.5 17 6.5 16.8 C4 16.6 2 15 1 12.5 Z" fill="#AFB1B3"/><path d="M3 16 C8 14 13 11 17.5 5" fill="none" stroke="#3C3F41" stroke-width="1.3"/></svg>
<div class="t" style="left:1009px;top:1250.81px;font-size:17px;line-height:17px;color:#BBBBBB;font-weight:normal;font-family:'Liberation Sans', sans-serif;letter-spacing:0.132px;">Spring</div>
<div class="t" style="left:1123px;top:1244.61px;font-size:17px;line-height:17px;color:#DCDCDC;font-weight:normal;font-family:'Liberation Sans', sans-serif;text-shadow:0.5px 0.5px 1px #111;letter-spacing:-0.996px;">CSDN</div>
<div class="t" style="left:1174px;top:1245.46px;font-size:16px;line-height:16px;color:#DCDCDC;font-weight:normal;font-family:'Liberation Sans', sans-serif;text-shadow:0.5px 0.5px 1px #111;">@</div>
<svg style="left:1188.5px;top:1244px;filter:drop-shadow(0.5px 0.5px 0.6px #111);" width="72" height="19.5" viewBox="0 0 72 19.5"><g fill="none" stroke="#DCDCDC" stroke-width="1.4" stroke-linecap="square">
<path d="M3.5 1.5 H13 L9 4.5 M9 4.5 V9.5 Q9 10.5 7.5 10 M1.5 6.5 H16.5 M3 11.5 H15 V16.5 M3 11.5 V16.5 M7 11.5 V16.5 M11 11.5 V16.5 M1 17 H17"/>
<path transform="translate(18,0)" d="M2 3 L7 1.5 M1 6.5 H8 M4.8 2.5 V17.5 M4.8 7 L1 13 M4.8 8.5 L8 11 M10 5 L11 8 M17 4 L15.2 8 M13.5 1.5 V8 Q13 13 9 17.5 M13.5 9 L17.5 17"/>
<path transform="translate(36,0)" d="M5 1.5 V8.5 H15 Q15 16 12 16.5 M5 4.5 H14 M1 12 H17"/>
<path transform="translate(53,0)" d="M5 1 L1.5 8 M3.5 5.5 V17.5 M9 1 L7.5 5 M8.5 3.5 H16.5 L15 6 M12.5 6.5 V16 Q12.5 17.5 11 17 M10 9 L7.5 14 M15 9 L17.5 13.5"/>
</g></svg>
<div style="left:256px;top:421px;width:293px;height:414px;background:#3C3F41;border:1px solid #555555;"></div>
<div style="left:257px;top:455px;width:293px;height:1.3px;background:#515151;"></div>
<div style="left:257px;top:586px;width:293px;height:1.3px;background:#515151;"></div>
<div style="left:257px;top:622px;width:293px;height:1.3px;background:#515151;"></div>
<div style="left:257px;top:658px;width:293px;height:1.3px;background:#515151;"></div>
<div style="left:257px;top:694px;width:293px;height:1.3px;background:#515151;"></div>
<div style="left:257px;top:730px;width:293px;height:1.3px;background:#515151;"></div>
<div style="left:257px;top:766px;width:293px;height:1.3px;background:#515151;"></div>
<div style="left:257px;top:802px;width:293px;height:1.3px;background:#515151;"></div>
<div style="left:257px;top:661px;width:293px;height:31px;background:#4B6EAF;"></div>
<div class="t" style="left:294.6px;top:429.49px;font-size:19.5px;line-height:19.5px;color:#BBBBBB;font-weight:normal;font-family:'Liberation Sans', sans-serif;letter-spacing:0.100px;"><u style="text-decoration-thickness:1.5px;text-underline-offset:2px;">N</u>ew</div>
<svg style="left:530px;top:432px;" width="11" height="13" viewBox="0 0 11 13"><path d="M0.5 0.5 L10 6.2 L0.5 12 Z" fill="#AFB1B3"/></svg>
<div class="t" style="left:294.6px;top:465.99px;font-size:19.5px;line-height:19.5px;color:#777777;font-weight:normal;font-family:'Liberation Sans', sans-serif;letter-spacing:-0.272px;">Cu<u style="text-decoration-thickness:1.5px;text-underline-offset:2px;">t</u></div>
<div class="t" style="left:476.3px;top:465.99px;font-size:19.5px;line-height:19.5px;color:#777777;font-weight:normal;font-family:'Liberation Sans', sans-serif;letter-spacing:0.476px;">Ctrl+X</div>
<div class="t" style="left:294.6px;top:497.29px;font-size:19.5px;line-height:19.5px;color:#777777;font-weight:normal;font-family:'Liberation Sans', sans-serif;letter-spacing:0.028px;"><u style="text-decoration-thickness:1.5px;text-underline-offset:2px;">C</u>opy</div>
<div class="t" style="left:476.3px;top:497.29px;font-size:19.5px;line-height:19.5px;color:#777777;font-weight:normal;font-family:'Liberation Sans', sans-serif;letter-spacing:0.261px;">Ctrl+C</div>
<div class="t" style="left:294.6px;top:528.49px;font-size:19.5px;line-height:19.5px;color:#BBBBBB;font-weight:normal;font-family:'Liberation Sans', sans-serif;letter-spacing:-0.915px;"><u style="text-decoration-thickness:1.5px;text-underline-offset:2px;">P</u>aste</div>
<div class="t" style="left:476.2px;top:528.49px;font-size:19.5px;line-height:19.5px;color:#BBBBBB;font-weight:normal;font-family:'Liberation Sans', sans-serif;letter-spacing:0.496px;">Ctrl+V</div>
<div class="t" style="left:294.6px;top:559.99px;font-size:19.5px;line-height:19.5px;color:#BBBBBB;font-weight:normal;font-family:'Liberation Sans', sans-serif;letter-spacing:-0.260px;">Jump to Source</div>
<div class="t" style="left:500.8px;top:559.99px;font-size:19.5px;line-height:19.5px;color:#BBBBBB;font-weight:normal;font-family:'Liberation Sans', sans-serif;letter-spacing:-0.497px;">F12</div>
<div class="t" style="left:294.6px;top:595.99px;font-size:19.5px;line-height:19.5px;color:#BBBBBB;font-weight:normal;font-family:'Liberation Sans', sans-serif;letter-spacing:-0.193px;">Analy<u style="text-decoration-thickness:1.5px;text-underline-offset:2px;">z</u>e</div>
<svg style="left:530px;top:598.5px;" width="11" height="13" viewBox="0 0 11 13"><path d="M0.5 0.5 L10 6.2 L0.5 12 Z" fill="#AFB1B3"/></svg>
<div class="t" style="left:294.6px;top:631.49px;font-size:19.5px;line-height:19.5px;color:#BBBBBB;font-weight:normal;font-family:'Liberation Sans', sans-serif;letter-spacing:-0.243px;"><u style="text-decoration-thickness:1.5px;text-underline-offset:2px;">R</u>efactor</div>
<svg style="left:530px;top:634px;" width="11" height="13" viewBox="0 0 11 13"><path d="M0.5 0.5 L10 6.2 L0.5 12 Z" fill="#AFB1B3"/></svg>
<div class="t" style="left:294.6px;top:668.49px;font-size:19.5px;line-height:19.5px;color:#C8C8C8;font-weight:normal;font-family:'Liberation Sans', sans-serif;letter-spacing:0.084px;">Edit Description</div>
<div class="t" style="left:294.6px;top:704.19px;font-size:19.5px;line-height:19.5px;color:#777777;font-weight:normal;font-family:'Liberation Sans', sans-serif;letter-spacing:0.280px;">Build <u style="text-decoration-thickness:1.5px;text-underline-offset:2px;">M</u>odule</div>
<div class="t" style="left:294.6px;top:739.99px;font-size:19.5px;line-height:19.5px;color:#BBBBBB;font-weight:normal;font-family:'Liberation Sans', sans-serif;letter-spacing:-0.032px;">Open In</div>
<svg style="left:530px;top:742.5px;" width="11" height="13" viewBox="0 0 11 13"><path d="M0.5 0.5 L10 6.2 L0.5 12 Z" fill="#AFB1B3"/></svg>
<div class="t" style="left:294.6px;top:775.69px;font-size:19.5px;line-height:19.5px;color:#BBBBBB;font-weight:normal;font-family:'Liberation Sans', sans-serif;letter-spacing:-0.125px;">Local <u style="text-decoration-thickness:1.5px;text-underline-offset:2px;">H</u>istory</div>
<svg style="left:530px;top:778.2px;" width="11" height="13" viewBox="0 0 11 13"><path d="M0.5 0.5 L10 6.2 L0.5 12 Z" fill="#AFB1B3"/></svg>
<div class="t" style="left:294.6px;top:811.29px;font-size:19.5px;line-height:19.5px;color:#777777;font-weight:normal;font-family:'Liberation Sans', sans-serif;letter-spacing:-0.380px;">File <u style="text-decoration-thickness:1.5px;text-underline-offset:2px;">P</u>ath</div>
<div class="t" style="left:418.9px;top:811.29px;font-size:19.5px;line-height:19.5px;color:#777777;font-weight:normal;font-family:'Liberation Sans', sans-serif;letter-spacing:0.459px;">Ctrl+Alt+F12</div>
<svg style="left:262px;top:462px;" width="24" height="24" viewBox="0 0 24 24"><g fill="none" stroke="#5F5F5F" stroke-width="2.3"><circle cx="6.1" cy="5.7" r="3.3"/><circle cx="6.1" cy="18" r="3.3"/><path d="M8.6 7.6 L22.1 20.6 M8.6 16.1 L22.1 3.1"/></g></svg>
<svg style="left:262px;top:492px;" width="24" height="24" viewBox="0 0 24 24"><path d="M3 2.8 H16.5 V4.8 H5 V18 H3 Z" fill="#606060"/><rect x="6.8" y="6.9" width="14.3" height="15.1" fill="#606060"/><path d="M9.5 11 H18.5 M9.5 14.2 H18.5 M9.5 17.4 H18.5" stroke="#3C3F41" stroke-width="1.3"/></svg>
<svg style="left:262px;top:524px;" width="24" height="24" viewBox="0 0 24 24"><rect x="3.9" y="3.5" width="15.9" height="18.6" fill="#AFB1B3"/><rect x="7.8" y="8.6" width="8.2" height="10.1" fill="#3C3F41"/><rect x="8.8" y="2" width="6.2" height="3.6" rx="1" fill="#AFB1B3"/><rect x="10.3" y="3.4" width="3.2" height="1.2" fill="#3C3F41"/></svg>
<svg style="left:262px;top:555px;" width="24" height="25" viewBox="0 0 24 25"><rect x="1.2" y="20.1" width="21.4" height="3.8" fill="#AFB1B3"/><path d="M4.2 18.6 V14.6 L14.8 4 L18.8 8 L8.2 18.6 Z M16.2 2.6 L17.6 1.2 Q18.2 0.6 18.8 1.2 L21.2 3.6 Q21.8 4.2 21.2 4.8 L19.8 6.2 Z" fill="#AFB1B3"/></svg>
<svg style="left:264.5px;top:665px;" width="22" height="22" viewBox="0 0 22 22"><path d="M0.5 19.7 V15 L11.2 4.9 L15.5 9.2 L5.4 19.7 Z" fill="#B4B5B7"/><path d="M15.49 0.38 L20.02 4.91 L16.91 8.02 L12.38 3.49 Z" fill="#B4B5B7" stroke="#B4B5B7" stroke-width="0.8" stroke-linejoin="round"/></svg>
<svg style="left:43px;top:373px;" width="174" height="41.5" viewBox="0 0 174 41.5"><path d="M2.4 2.4 H171.6 V39.1 H2.4 Z" fill="none" stroke="#FE1B10" stroke-width="4.8" stroke-linejoin="bevel"/></svg>
<svg style="left:227px;top:644px;" width="325" height="65" viewBox="0 0 325 65"><path d="M2.5 2.5 H322.5 V62.5 H2.5 Z" fill="none" stroke="#FE1B10" stroke-width="5" stroke-linejoin="bevel"/></svg>
<svg style="left:5px;top:1113px;" width="66" height="117.5" viewBox="0 0 66 117.5"><path d="M2.5 2.5 H63.5 V115.0 H2.5 Z" fill="none" stroke="#FE1B10" stroke-width="5" stroke-linejoin="bevel"/></svg>
</body></html>
